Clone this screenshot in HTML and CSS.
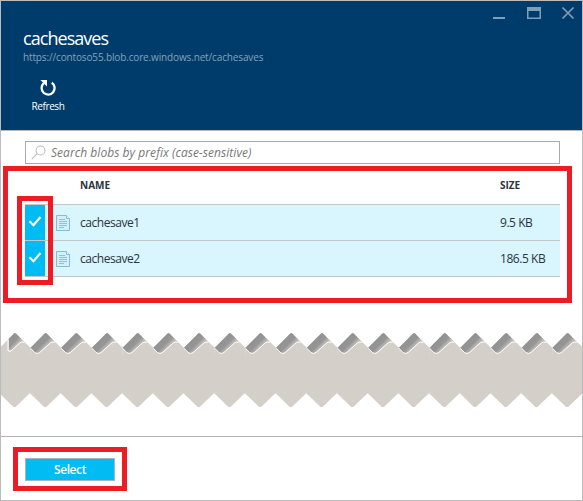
FILE: index.html
```html
<!DOCTYPE html>
<html lang="en">
<head>
<meta charset="utf-8">
<title>cachesaves</title>
<link rel="stylesheet" href="styles.css">
</head>
<body>
<div class="blade">
  <header class="header">
    <svg class="window-controls" width="84" height="16" viewBox="0 0 84 16" fill="none" stroke="#809eb6">
      <path d="M1 13h12" stroke-width="2"/>
      <path d="M35 4h14" stroke-width="4"/><path d="M35.750 4v9.250h12.500V4" stroke-width="1.500"/>
      <path d="M70.500 2.500l11 11M81.500 2.500l-11 11" stroke-width="1.700"/>
    </svg>
    <h1 class="title"><span>cachesaves</span></h1>
    <p class="url"><span>https://contoso55.blob.core.windows.net/cachesaves</span></p>
    <button class="refresh">
      <svg width="18" height="18" viewBox="0 0 18 18"><path d="M12.800 3.700A6.500 6.500 0 1 1 4.800 4.200" fill="none" stroke="#fff" stroke-width="2.300"/><path d="M1.300 1H8v6.500L6 5.500 4.500 4z" fill="#fff"/></svg>
      <span>Refresh</span>
    </button>
  </header>
  <main class="content">
    <div class="search">
      <svg width="16" height="16" viewBox="0 0 16 16" fill="none" stroke="#bbb" stroke-width="1.100"><circle cx="9.500" cy="5.500" r="4.500"/><path d="M6.300 8.700L.8 14.200"/></svg>
      <span>Search blobs by prefix (case-sensitive)</span>
    </div>
    <section class="list">
      <div class="row head"><span class="name">NAME</span><span class="size">SIZE</span></div>
      <div class="row item">
        <span class="check"><svg width="14" height="12" viewBox="0 0 14 12"><path d="M1.500 5.200l4 4L12.500 1" fill="none" stroke="#fff" stroke-width="2.200"/></svg></span>
        <svg class="doc" width="14" height="16" viewBox="0 0 14 16"><path d="M.5.5h10l3 3v12H.5z" fill="#d2f0f9" stroke="#83bdd2"/><path d="M10.500.5v3h3" fill="#fff" stroke="#83bdd2"/><path d="M3 4.500h6M3 6.500h8M3 8.500h8M3 10.500h8M3 12.500h5" stroke="#82c6df"/></svg>
        <span class="name">cachesave1</span><span class="size">9.5 KB</span>
      </div>
      <div class="row item">
        <span class="check"><svg width="14" height="12" viewBox="0 0 14 12"><path d="M1.500 5.200l4 4L12.500 1" fill="none" stroke="#fff" stroke-width="2.200"/></svg></span>
        <svg class="doc" width="14" height="16" viewBox="0 0 14 16"><path d="M.5.5h10l3 3v12H.5z" fill="#d2f0f9" stroke="#83bdd2"/><path d="M10.500.5v3h3" fill="#fff" stroke="#83bdd2"/><path d="M3 4.500h6M3 6.500h8M3 8.500h8M3 10.500h8M3 12.500h5" stroke="#82c6df"/></svg>
        <span class="name">cachesave2</span><span class="size">186.5 KB</span>
      </div>
      <div class="check-outline"></div>
    </section>
    <svg class="tear" id="tear" width="581" height="80" viewBox="1 330 581 80">
      <defs>
        <linearGradient id="shade" gradientUnits="userSpaceOnUse" x1="-7" y1="7" x2="1" y2="15">
          <stop offset="0" stop-color="#929292"/><stop offset=".5" stop-color="#959595"/><stop offset="1" stop-color="#d0cdca"/>
        </linearGradient>
        <g id="tooth">
          <path d="M-15.400 15L-1 .5Q0-.5 1 .5L15.600 15V60.500L14.600 60.500L.5 74H-1.500L-15.400 60.500z" fill="#d4cfc9"/>
          <path d="M-15.400 15L-1 .5Q0-.5 1 .5L9 8.700H6L-6 19.500Q-8.500 21-11 19.500z" fill="url(#shade)"/>
          <path d="M-15.400 15L-11 19.500Q-8.500 21.500-6 19.500L5 9.700Q6 9 9.500 9.200" fill="none" stroke="#fff"/>
        </g>
        <g id="first-tooth">
          <path d="M-15.400 15L-1 .5Q0-.5 1 .5L15.600 15V60.500L14.600 60.500L.5 74H-1.500L-15.400 60.500z" fill="#d4cfc9"/>
          <path d="M-6 5.500L-1 .5Q0-.5 1 .5L9 8.700H6L-3 17.500H-6z" fill="url(#shade)"/>
          <path d="M-7 7V18H-4L5 9.700Q6 9 9.500 9.200" fill="none" stroke="#fff"/>
        </g>
      </defs>
      <path d="M1 355h581v37H1z" fill="#d4cfc9"/>
    </svg>
  </main>
  <footer class="footer">
    <div class="select-outline"><button class="select">Select</button></div>
  </footer>
</div>
<script src="tear.js"></script>
</body>
</html>
```
FILE: styles.css
```css
* { box-sizing: border-box; }
body { margin: 0; background: #fff; font-family: "Open Sans", "Noto Sans", sans-serif; color: #2b3440; }
button { font-family: inherit; border: 0; padding: 0; background: none; }
.blade { width: 583px; height: 501px; border: 1px solid #bbb; display: flex; flex-direction: column; overflow: hidden; }
.header { height: 130px; flex: none; background: #003c6b; border-bottom: 1px solid #b4b8bb; position: relative; padding: 24px 22px 0; color: #fff; }
.window-controls { position: absolute; top: 4px; right: 6px; }
.title { margin: 0; height: 26px; font-size: 18px; line-height: 26px; font-weight: 400; letter-spacing: -.95px; }
.url { margin: 0; height: 14px; margin-top: -1px; font-size: 10px; line-height: 14px; color: #84a2ba; letter-spacing: -.14px; }
.refresh { display: flex; flex-direction: column; align-items: center; width: 50px; margin-top: 15px; color: #fff; font-size: 10px; line-height: 14px; letter-spacing: -.4px; }
.refresh span { margin-top: 2px; }
.content { height: 305px; flex: none; padding-top: 10px; }
.search { width: 535px; height: 23px; margin-left: 24px; border: 1px solid #a9a9a9; display: flex; align-items: center; padding-left: 5px; font-size: 12px; font-style: italic; color: #777; letter-spacing: .05px; }
.search span { margin-left: 4px; }
.list { position: relative; width: 569px; height: 137px; margin: 2px 0 0 2px; border: 5px solid #ed1c24; padding: 0 7px 0 17px; }
.row { display: flex; align-items: center; border-bottom: 1px solid #c4c6c8; }
.head { height: 34px; padding-left: 55px; font-size: 10px; font-weight: 700; padding-bottom: 6px; }
.item { height: 36px; background: #d9f5fe; font-size: 12px; letter-spacing: -.45px; }
.name { width: 420px; flex: none; }
.check { width: 20px; height: 35px; background: #00bcf2; display: flex; align-items: center; justify-content: center; }
.check svg { margin-bottom: 2px; }
.doc { margin: 0 10px 0 11px; }
.check-outline { position: absolute; left: 9px; top: 25px; width: 36px; height: 89px; border: 5px solid #ed1c24; }
.tear { display: block; margin-top: 27px; }
.footer { border-top: 1px solid #b4b4b4; flex: 1; padding: 10px 12px; }
.select-outline { width: 114px; height: 44px; border: 5px solid #ed1c24; padding: 6px 7px; }
.select { display: block; width: 90px; height: 23px; background: #00bcf2; border: 1px solid #a6b5bd; color: #fff; font-size: 12px; font-weight: 600; line-height: 20px; letter-spacing: -.4px; }
```
FILE: tear.js
```js
const tear = document.getElementById("tear");
for (let i = 18; i >= 0; i--) {
  const tooth = document.createElementNS("http://www.w3.org/2000/svg", "use");
  tooth.setAttribute("href", i === 0 ? "#first-tooth" : "#tooth");
  tooth.setAttribute("transform", `translate(${15 + i * 30.7} 333)`);
  tear.insertBefore(tooth, tear.lastElementChild);
}
```
